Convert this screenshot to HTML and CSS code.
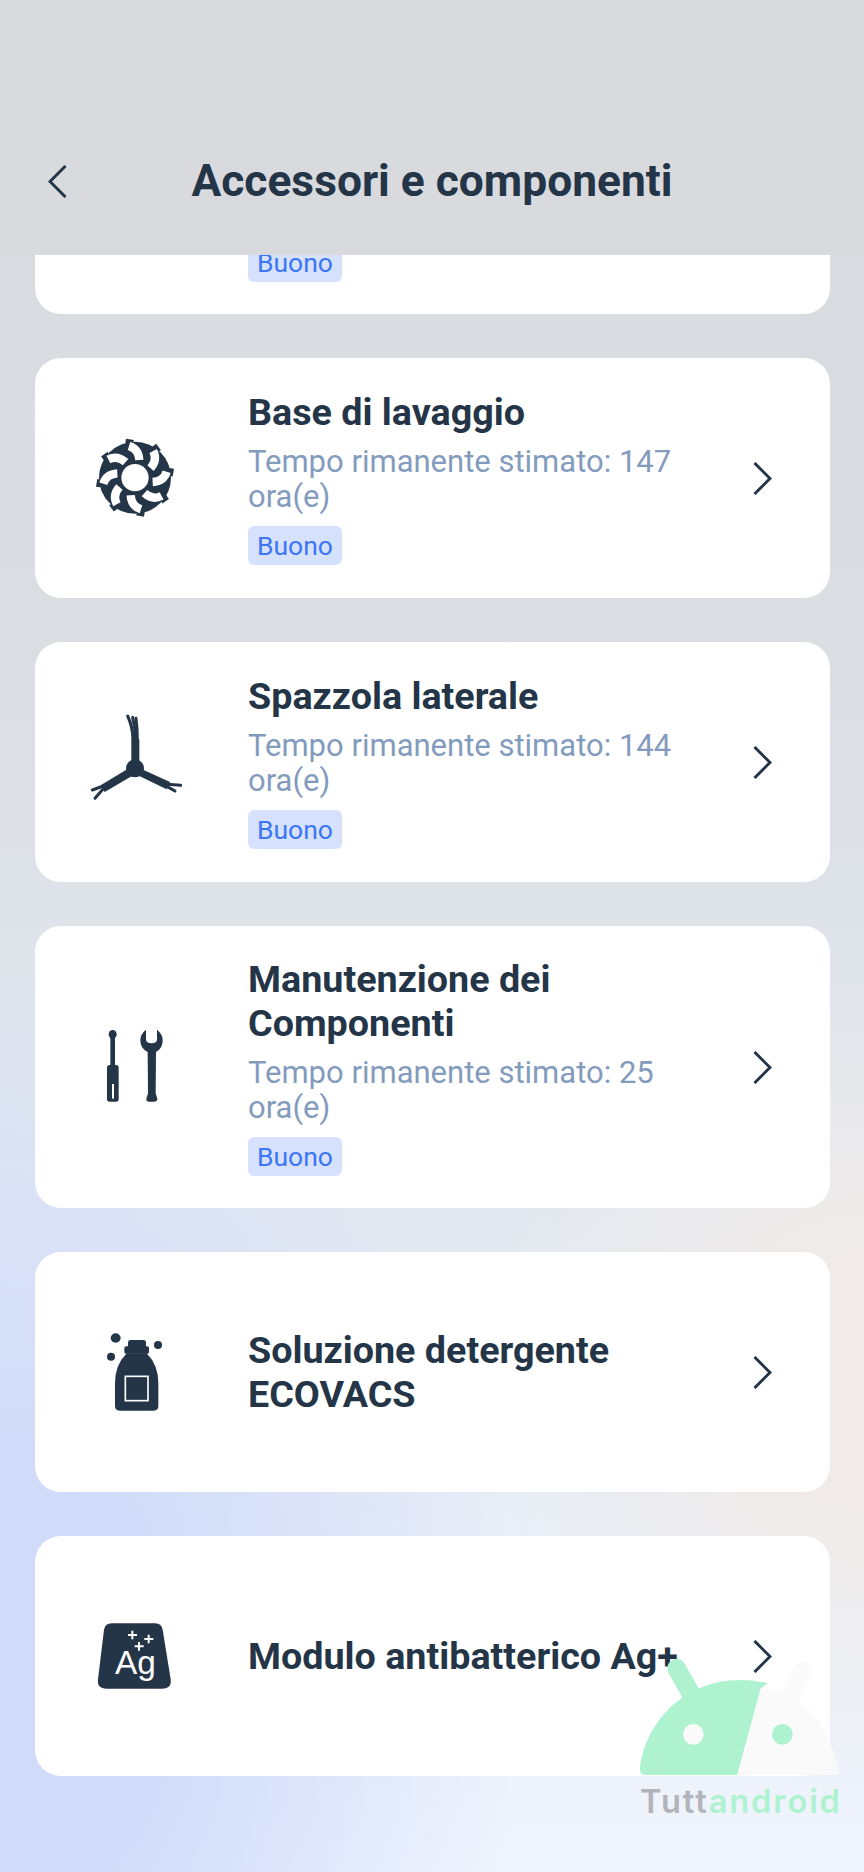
FILE: index.html
```html
<!DOCTYPE html>
<html>
<head>
<meta charset="utf-8">
<title>Accessori e componenti</title>
<link rel="stylesheet" href="styles.css">
</head>
<body>
  <div class="page">
    <div class="topbar">
      <svg class="back" viewBox="0 0 19 33"><path d="M17.5 1 L2 16.5 L17.5 32"/></svg>
      <div class="page-title">Accessori e componenti</div>
    </div>

    <div class="list">
      <div class="card card-cut">
        <div class="card-text"><span class="badge">Buono</span></div>
      </div>

      <div class="card">
        <svg class="icon" viewBox="78 90 288 288">
          <g class="dark">
            <circle cx="225" cy="233" r="108"/>
            <path id="nub" d="M198 116 L222 120 L216 134 L196 130 Z"/>
            <use href="#nub" transform="rotate(45 225 233)"/>
            <use href="#nub" transform="rotate(90 225 233)"/>
            <use href="#nub" transform="rotate(135 225 233)"/>
            <use href="#nub" transform="rotate(180 225 233)"/>
            <use href="#nub" transform="rotate(225 225 233)"/>
            <use href="#nub" transform="rotate(270 225 233)"/>
            <use href="#nub" transform="rotate(315 225 233)"/>
          </g>
          <circle class="light" cx="225" cy="233" r="41"/>
          <g class="blades">
            <path id="blade" d="M207 138 Q236 147 238 180"/>
            <use href="#blade" transform="rotate(45 225 233)"/>
            <use href="#blade" transform="rotate(90 225 233)"/>
            <use href="#blade" transform="rotate(135 225 233)"/>
            <use href="#blade" transform="rotate(180 225 233)"/>
            <use href="#blade" transform="rotate(225 225 233)"/>
            <use href="#blade" transform="rotate(270 225 233)"/>
            <use href="#blade" transform="rotate(315 225 233)"/>
          </g>
        </svg>
        <div class="card-text">
          <div class="card-title">Base di lavaggio</div>
          <div class="card-sub">Tempo rimanente stimato: 147 ora(e)</div>
          <span class="badge">Buono</span>
        </div>
        <svg class="arrow" viewBox="0 0 19 33"><path d="M1.5 1 L17 16.5 L1.5 32"/></svg>
      </div>

      <div class="card">
        <svg class="icon" viewBox="78 72 288 288">
          <circle class="dark" cx="225" cy="235" r="27"/>
          <g class="dark">
            <path d="M214 235 L214 148 L238 148 L238 235 Z"/>
            <path d="M204 236 L122 286 L134 306 L216 258 Z"/>
            <path d="M246 238 L330 276 L320 298 L238 258 Z"/>
          </g>
          <g class="bristle">
            <path d="M219 150 Q218 110 203 78"/>
            <path d="M226 150 Q226 115 218 82"/>
            <path d="M232 150 Q232 115 228 85"/>
            <path d="M130 288 L97 300"/>
            <path d="M130 296 L105 325"/>
            <path d="M322 283 L362 286"/>
            <path d="M322 290 L345 303"/>
          </g>
        </svg>
        <div class="card-text">
          <div class="card-title">Spazzola laterale</div>
          <div class="card-sub">Tempo rimanente stimato: 144 ora(e)</div>
          <span class="badge">Buono</span>
        </div>
        <svg class="arrow" viewBox="0 0 19 33"><path d="M1.5 1 L17 16.5 L1.5 32"/></svg>
      </div>

      <div class="card">
        <svg class="icon" viewBox="78 57 288 288">
          <g class="dark">
            <ellipse cx="158" cy="103" rx="12" ry="13"/>
            <path d="M151 105 L165 105 L165 195 L151 195 Z"/>
            <rect x="141" y="195" width="35" height="110" rx="8"/>
            <path d="M258 89 L258 118 Q258 130 275 130 Q291 130 291 118 L291 89 Q308 102 308 122 Q308 145 288 156 L287 280 L292 296 Q292 305 282 305 L268 305 Q258 305 259 296 L264 280 L263 156 Q241 145 241 122 Q241 102 258 89 Z"/>
          </g>
          <rect class="light" x="156" y="252" width="6" height="44"/>
        </svg>
        <div class="card-text">
          <div class="card-title">Manutenzione dei Componenti</div>
          <div class="card-sub">Tempo rimanente stimato: 25 ora(e)</div>
          <span class="badge">Buono</span>
        </div>
        <svg class="arrow" viewBox="0 0 19 33"><path d="M1.5 1 L17 16.5 L1.5 32"/></svg>
      </div>

      <div class="card">
        <svg class="icon" viewBox="78 72 288 288">
          <g class="dark">
            <ellipse cx="167" cy="114" rx="15" ry="14"/>
            <circle cx="294" cy="135" r="12"/>
            <circle cx="153" cy="170" r="12"/>
            <rect x="204" y="120" width="54" height="30" rx="8"/>
            <rect x="193" y="139" width="74" height="22" rx="5"/>
            <path d="M200 160 L260 160 Q295 195 295 250 L295 318 Q295 332 281 332 L179 332 Q165 332 165 318 L165 250 Q165 195 200 160 Z"/>
          </g>
          <rect class="label" x="196" y="229" width="68" height="73"/>
        </svg>
        <div class="card-text">
          <div class="card-title">Soluzione detergente ECOVACS</div>
        </div>
        <svg class="arrow" viewBox="0 0 19 33"><path d="M1.5 1 L17 16.5 L1.5 32"/></svg>
      </div>

      <div class="card">
        <svg class="icon" viewBox="78 21 288 288">
          <path class="dark" d="M155 67 L285 67 Q304 67 308 86 L332 235 Q336 263 306 263 L140 263 Q110 263 114 235 L132 86 Q136 67 155 67 Z"/>
          <g class="plus">
            <path d="M204 102 H231 M217 89 V115"/>
            <path d="M253 114 H280 M266 101 V127"/>
            <path d="M224 136 H251 M237 123 V149"/>
          </g>
          <text class="ag" x="226" y="220" text-anchor="middle">Ag</text>
        </svg>
        <div class="card-text">
          <div class="card-title">Modulo antibatterico Ag+</div>
        </div>
        <svg class="arrow" viewBox="0 0 19 33"><path d="M1.5 1 L17 16.5 L1.5 32"/></svg>
      </div>
    </div>

    <svg class="watermark" viewBox="0 0 792 756">
      <g class="wm-green">
        <path d="M230 145 L275 225" class="wm-antenna"/>
        <path d="M120 445 C135 310 250 180 420 180 Q465 180 503 190 L482 205 L412 465 L140 465 Q118 465 120 445 Z"/>
      </g>
      <g class="wm-white">
        <path d="M610 155 L570 225" class="wm-antenna-w"/>
        <path d="M485 205 C610 210 690 320 718 465 L416 465 Z"/>
      </g>
      <circle cx="280" cy="343" r="31" fill="#fafafa"/>
      <circle cx="547" cy="343" r="31" fill="#aef2d0"/>
      <text class="wm-text" x="120" y="578" textLength="600"><tspan class="wm-tutt">Tutt</tspan><tspan class="wm-android">android</tspan></text>
    </svg>
  </div>
</body>
</html>
```

FILE: styles.css
```css
body{
  margin: 0;
  font-family: Roboto, "Liberation Sans", sans-serif;
}

.page{
  position: relative;
  width: 864px;
  height: 1872px;
  overflow: hidden;
  background:
    radial-gradient(ellipse 520px 720px at 0px 1680px, #cfdbf9 0%, #cfdbf9 30%, rgba(207,219,249,0) 100%),
    radial-gradient(ellipse 380px 420px at 864px 1380px, #f0ebe8 0%, #f0ebe8 25%, rgba(240,235,232,0) 100%),
    linear-gradient(180deg, #d8dade 0%, #dadde2 35%, #e2e7ef 60%, #e8edf6 80%, #eff4fd 100%);
}

.topbar{
  position: relative;
  height: 255px;
  padding-top: 155px;
  box-sizing: border-box;
  background-color: #d8dade;
  text-align: center;
}

.back{
  position: absolute;
  left: 48px;
  top: 165px;
  width: 19px;
  height: 33px;
  fill: none;
  stroke: #243548;
  stroke-width: 3;
}

.page-title{
  font-size: 44.3px;
  line-height: 52px;
  font-weight: 700;
  color: #243548;
}

.list{
  display: flex;
  flex-direction: column;
  gap: 44px;
  padding: 0 34px 0 35px;
}

.card{
  display: flex;
  align-items: center;
  box-sizing: border-box;
  min-height: 240px;
  padding: 32px 58px 32px 51px;
  border-radius: 26px;
  background-color: #fff;
}

.card-cut{
  height: 59px;
  min-height: 0;
  overflow: hidden;
  align-items: flex-end;
  padding: 0 0 32px 213px;
  border-radius: 0 0 26px 26px;
}

.icon{
  flex: none;
  width: 96px;
  height: 96px;
  margin-right: 66px;
}

.card-text{
  width: 440px;
}

.card-title{
  margin-top: -1px;
  font-size: 37.7px;
  line-height: 44px;
  font-weight: 700;
  color: #243548;
}

.card-sub{
  margin-top: 10px;
  font-size: 31px;
  line-height: 35px;
  color: #839bbd;
}

.badge{
  display: inline-block;
  margin-top: 12px;
  padding: 0 9px;
  height: 39px;
  line-height: 39px;
  font-size: 26.5px;
  color: #3c76f5;
  background-color: #d6e2fd;
  border-radius: 6px;
}

.arrow{
  flex: none;
  width: 19px;
  height: 33px;
  margin-left: auto;
  fill: none;
  stroke: #243548;
  stroke-width: 3;
}

.dark{ fill: #243548; }
.light{ fill: #fff; }

.blades path{
  fill: none;
  stroke: #fff;
  stroke-width: 25;
}
.blades use{
  fill: none;
  stroke: #fff;
  stroke-width: 25;
}

.bristle path{
  fill: none;
  stroke: #243548;
  stroke-width: 9;
  stroke-linecap: round;
}

.label{
  fill: none;
  stroke: #fff;
  stroke-width: 5;
}

.plus path{
  fill: none;
  stroke: #fff;
  stroke-width: 6;
}

.ag{
  font-family: "Liberation Sans", sans-serif;
  font-size: 100px;
  fill: #fff;
}

.watermark{
  position: absolute;
  left: 600px;
  top: 1620px;
  width: 264px;
  height: 252px;
}

.wm-green{ fill: #aef2d0; }
.wm-white{ fill: rgba(250,250,250,0.9); }

.wm-antenna{
  fill: none;
  stroke: #aef2d0;
  stroke-width: 56;
  stroke-linecap: round;
}
.wm-antenna-w{
  fill: none;
  stroke: rgba(250,250,250,0.9);
  stroke-width: 56;
  stroke-linecap: round;
}

.wm-text{
  font-family: Inter, sans-serif;
  font-size: 98px;
  font-weight: 600;
}
.wm-tutt{ fill: #b2b4ba; }
.wm-android{ fill: #aef2d0; }
```
